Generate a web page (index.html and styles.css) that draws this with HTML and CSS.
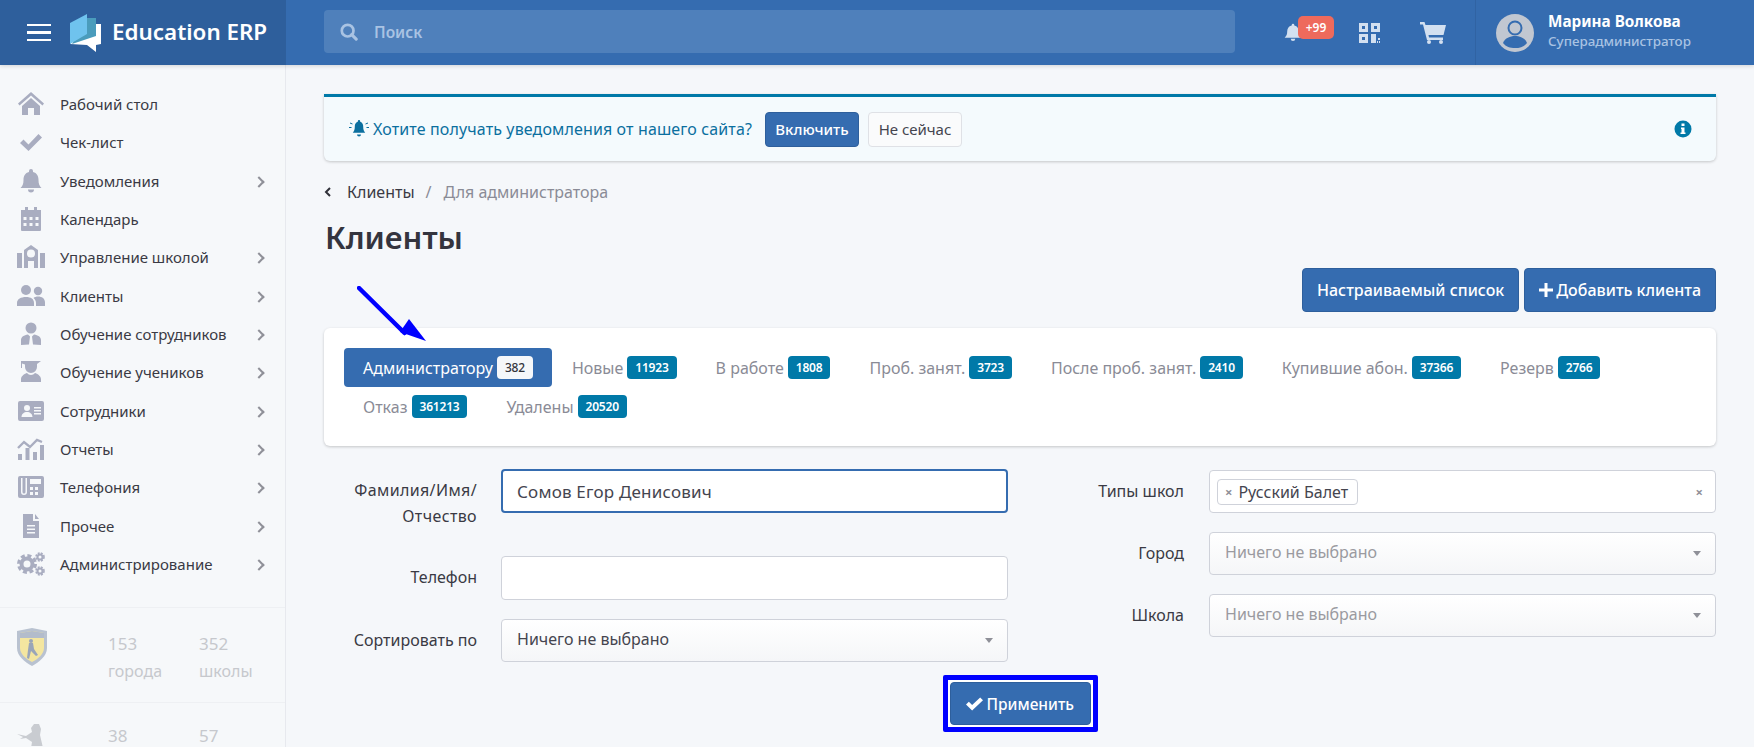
FILE: index.html
```html
<!DOCTYPE html>
<html lang="ru">
<head>
    <meta charset="UTF-8">
    <title>Education ERP</title>
    <link rel="stylesheet" href="styles.css">
</head>
<body>
    <header class="topbar">
        <div class="brand">
            <div class="burger"><span></span><span></span><span></span></div>
            <svg class="logo" viewBox="0 0 32 38">
                <path fill="#fff" d="M26 10h5v20l-5 1v7l-9-7-17-1z"/>
                <path fill="#4a9cbc" d="M17 4h9v18L2 30z"/>
                <path fill="#6fc3ee" d="M0 9l17-9v20L0 30z"/>
            </svg>
            <span class="brand-name">Education ERP</span>
        </div>
        <div class="search">
            <svg class="search-icon" viewBox="0 0 20 20"><circle cx="8.5" cy="8.5" r="6.5" fill="none" stroke="#a9c3e3" stroke-width="3"/><path d="M13 13l5 5" stroke="#a9c3e3" stroke-width="3.4" stroke-linecap="round"/></svg>
            <span>Поиск</span>
        </div>
        <div class="top-icons">
            <div class="bell-wrap">
                <svg class="top-bell" viewBox="0 0 28 28"><path fill="#d3e0f0" d="M14 1a2 2 0 0 1 2 2v1c5 1 7 5 7 9 0 5 1 7 4 10H1c3-3 4-5 4-10 0-4 2-8 7-9V3a2 2 0 0 1 2-2zM10.500 24.500h7a3.500 3.500 0 0 1-7 0z"/></svg>
                <span class="bell-badge">+99</span>
            </div>
            <svg class="top-qr" viewBox="0 0 21 20">
                <path fill="#d3e0f0" fill-rule="evenodd" d="M0 0h9v9H0zM3 3v3h3V3zM12 0h9v9h-9zM15 3v3h3V3zM0 11h9v9H0zM3 14v3h3v-3zM12 11h5v3h4v-3 0 3h-4v6h-5zM19 15h2v2h-2zM18 18h1v2h-1zM20 18h1v2h-1z"/>
            </svg>
            <svg class="top-cart" viewBox="0 0 26 22">
                <path fill="#d3e0f0" d="M0 0h4.500l1 3H26l-2.500 10H8.500l.5 2.500h14V18H7L3 2.500H0z"/>
                <circle cx="9" cy="20" r="2" fill="#d3e0f0"/><circle cx="21" cy="20" r="2" fill="#d3e0f0"/>
            </svg>
        </div>
        <div class="user">
            <svg class="avatar" viewBox="0 0 38 38">
                <circle cx="19" cy="19" r="19" fill="#c1c7d1"/>
                <circle cx="19" cy="14" r="6.500" fill="none" stroke="#356cb0" stroke-width="2"/>
                <path fill="#356cb0" d="M7 29c2-5 7-7 12-7s10 2 12 7c-3 4-7 5-12 5s-9-1-12-5z"/>
            </svg>
            <div class="user-text">
                <div class="user-name">Марина Волкова</div>
                <div class="user-role">Суперадминистратор</div>
            </div>
        </div>
    </header>

    <div class="layout">
        <aside class="sidebar">
            <nav class="side-nav">
                <a class="side-item">
                    <svg class="side-icon" viewBox="0 0 28 24"><path d="M14 0L1 11.500l1.500 2L14 3.500l11.500 10 1.500-2z"/><path d="M5 14l9-8 9 8v9h-6v-7h-6v7H5z"/></svg>
                    <span>Рабочий стол</span>
                </a>
                <a class="side-item">
                    <svg class="side-icon" viewBox="0 0 28 24"><path d="M3 13l3.500-3.500 5 5L21.500 4 25 7.500 11.500 21z"/></svg>
                    <span>Чек-лист</span>
                </a>
                <a class="side-item has-sub">
                    <svg class="side-icon" viewBox="0 0 28 24"><path d="M14 0a2 2 0 0 1 2 2v1c4 1 5.500 4 5.500 8 0 4 1 6 3 8h-21c2-2 3-4 3-8 0-4 1.500-7 5.500-8V2a2 2 0 0 1 2-2zM11 20.500h6a3 3 0 0 1-6 0z"/></svg>
                    <span>Уведомления</span>
                </a>
                <a class="side-item">
                    <svg class="side-icon" viewBox="0 0 28 24"><path fill-rule="evenodd" d="M4 3h4V0h3v3h6V0h3v3h4v20a1 1 0 0 1-1 1H5a1 1 0 0 1-1-1zM6.500 10v3h3v-3zM12.500 10v3h3v-3zM18.500 10v3h3v-3zM6.500 16v3h3v-3zM12.500 16v3h3v-3zM18.500 16v3h3v-3z"/></svg>
                    <span>Календарь</span>
                </a>
                <a class="side-item has-sub">
                    <svg class="side-icon" viewBox="0 0 28 24"><path fill-rule="evenodd" d="M14 0l7 5v18h-4v-7h-6v7H7V5zM14 4.500a4 4 0 1 0 0 8 4 4 0 0 0 0-8zM0 8h5v15H0zM23 8h5v15h-5z"/></svg>
                    <span>Управление школой</span>
                </a>
                <a class="side-item has-sub">
                    <svg class="side-icon" viewBox="0 0 28 24"><circle cx="9" cy="6" r="5"/><circle cx="21" cy="7" r="4.200"/><path d="M0 22v-3c0-4 4-6 9-6s8 2 8 6v3zM19 22v-3c0-2-1-4-2.500-5 1-1 3-1.500 4.500-1.500 4 0 7 2 7 6V22z"/></svg>
                    <span>Клиенты</span>
                </a>
                <a class="side-item has-sub">
                    <svg class="side-icon" viewBox="0 0 28 24"><circle cx="14" cy="6" r="5.500"/><path fill-rule="evenodd" d="M4 23v-5c0-3 3-5 7-5.500l2 2-1 8zM24 23v-5c0-3-3-5-7-5.500l-2 2 1 8z"/></svg>
                    <span>Обучение сотрудников</span>
                </a>
                <a class="side-item has-sub">
                    <svg class="side-icon" viewBox="0 0 28 24"><path d="M4 1h20l-4 3v3a6 6 0 0 1-12 0V4.500L5 3.500V8H4z"/><path d="M4 22v-3c0-3 4-5.500 6-6 1 1 2.500 2 4 2s3-1 4-2c2 .5 6 3 6 6v3z"/></svg>
                    <span>Обучение учеников</span>
                </a>
                <a class="side-item has-sub">
                    <svg class="side-icon" viewBox="0 0 28 24"><path fill-rule="evenodd" d="M3 2h22a2 2 0 0 1 2 2v16a2 2 0 0 1-2 2H3a2 2 0 0 1-2-2V4a2 2 0 0 1 2-2zM10 6a3 3 0 1 0 0 6 3 3 0 0 0 0-6zM4.500 18h11c0-3-2.500-5-5.500-5s-5.500 2-5.500 5zM17 8v1.500h7V8zM17 11v1.500h7V11zM17 14v1.500h7V14z"/></svg>
                    <span>Сотрудники</span>
                </a>
                <a class="side-item has-sub">
                    <svg class="side-icon" viewBox="0 0 28 24"><path d="M1 11l6-6 6 5 7-7 5 2" fill="none" stroke="#a9adc0" stroke-width="2.400"/><path d="M1 17h4v6H1zM8.500 11h4v12h-4zM16 15h4v8h-4zM23 8h4v15h-4z"/></svg>
                    <span>Отчеты</span>
                </a>
                <a class="side-item has-sub">
                    <svg class="side-icon" viewBox="0 0 28 24"><path fill-rule="evenodd" d="M3 1h22a2 2 0 0 1 2 2v18a2 2 0 0 1-2 2H3a2 2 0 0 1-2-2V3a2 2 0 0 1 2-2zM4 3v14a3 3 0 0 0 6 0V3h-1.500v14a1.500 1.500 0 0 1-3 0V3zM13 4v5h11V4zM13 12v3h3v-3zM18 12v3h3v-3zM13 17v3h3v-3zM18 17v3h3v-3z"/></svg>
                    <span>Телефония</span>
                </a>
                <a class="side-item has-sub">
                    <svg class="side-icon" viewBox="0 0 28 24"><path fill-rule="evenodd" d="M6 0h10v7h6v17H6zM18 0l4 5h-4zM10 11v1.500h8V11zM10 14.500V16h8v-1.500zM10 18v1.500h8V18z"/></svg>
                    <span>Прочее</span>
                </a>
                <a class="side-item has-sub">
                    <svg class="side-icon" viewBox="0 0 28 24">
                        <circle cx="10" cy="12" r="5.500" fill="none" stroke="#a9adc0" stroke-width="4"/>
                        <circle cx="10" cy="12" r="8.500" fill="none" stroke="#a9adc0" stroke-width="3" stroke-dasharray="4 2.700"/>
                        <circle cx="23" cy="5" r="2.500" fill="none" stroke="#a9adc0" stroke-width="2"/>
                        <circle cx="23" cy="5" r="4" fill="none" stroke="#a9adc0" stroke-width="1.600" stroke-dasharray="2 1.200"/>
                        <circle cx="23" cy="19" r="2.500" fill="none" stroke="#a9adc0" stroke-width="2"/>
                        <circle cx="23" cy="19" r="4" fill="none" stroke="#a9adc0" stroke-width="1.600" stroke-dasharray="2 1.200"/>
                    </svg>
                    <span>Администрирование</span>
                </a>
            </nav>
            <div class="side-stat">
                <svg class="stat-logo" viewBox="0 0 30 38">
                    <path fill="#b9c2d0" d="M0 3l15-3 15 3v17c0 8-8 14-15 18C8 34 0 28 0 20z"/>
                    <path fill="#f4e6a0" d="M3 5l12-2 12 2v15c0 6-6 11-12 14C9 31 3 26 3 20z"/>
                    <path fill="#b3bccb" d="M3 5l12-2 12 2v5H3z"/>
                    <circle cx="14" cy="13" r="2" fill="#9aa5b8"/>
                    <path fill="#9aa5b8" d="M12 15h4l1 6 4 6-2 1-5-5-2 8-2-1 1-8z"/>
                </svg>
                <div class="stat"><div class="stat-num">153</div><div class="stat-label">города</div></div>
                <div class="stat"><div class="stat-num">352</div><div class="stat-label">школы</div></div>
            </div>
            <div class="side-stat side-stat-cut">
                <svg class="stat-logo" viewBox="0 0 30 38">
                    <path fill="#c9ccd1" d="M0 11l9 2 6-4-1-4 3-4h5l2 5-1 6 3 13H14l1-6-6-4-6 1 3-2z"/>
                </svg>
                <div class="stat"><div class="stat-num">38</div></div>
                <div class="stat"><div class="stat-num">57</div></div>
            </div>
        </aside>

        <main class="content">
            <div class="alert">
                <svg class="alert-bell" viewBox="0 0 20 18">
                    <path fill="#0b6f9f" d="M10 0a1.200 1.200 0 0 1 1.200 1.200v.6c2.300.7 3 2.700 3 5 0 3 .7 4.400 2 6H3.800c1.300-1.600 2-3 2-6 0-2.300.7-4.300 3-5v-.6A1.200 1.200 0 0 1 10 0zM8 14.500h4a2 2 0 0 1-4 0z"/>
                    <path stroke="#0b6f9f" stroke-width="1" d="M1 3l2.500 1M19 3l-2.500 1M0 7.500h2.500M20 7.500h-2.500"/>
                </svg>
                <span class="alert-text">Хотите получать уведомления от нашего сайта?</span>
                <button class="btn btn-small">Включить</button>
                <button class="btn-light">Не сейчас</button>
                <svg class="alert-info" viewBox="0 0 18 18"><circle cx="9" cy="9" r="8.500" fill="#0079a8"/><path fill="#fff" d="M7.500 3.500h3v2.500h-3zM7 7.500h3.500v5h1V14H6.500v-1.500h1V9H7z"/></svg>
            </div>

            <div class="crumbs">
                <svg class="crumb-back" viewBox="0 0 8 10"><path d="M6 1L2 5l4 4" fill="none" stroke="#2f3038" stroke-width="2"/></svg>
                <a class="crumb-link">Клиенты</a>
                <span class="crumb-sep">/</span>
                <span class="crumb-now">Для администратора</span>
            </div>
            <h1 class="page-title">Клиенты</h1>

            <div class="toolbar">
                <button class="btn btn-big">Настраиваемый список</button>
                <button class="btn btn-big"><svg class="plus" viewBox="0 0 14 14"><path fill="#fff" d="M5.500 0h3v5.500H14v3H8.500V14h-3V8.500H0v-3h5.500z"/></svg>Добавить клиента</button>
            </div>

            <div class="card tabs">
                <a class="tab tab-active">Администратору <span class="badge badge-light">382</span></a>
                <a class="tab">Новые <span class="badge">11923</span></a>
                <a class="tab">В работе <span class="badge">1808</span></a>
                <a class="tab">Проб. занят. <span class="badge">3723</span></a>
                <a class="tab">После проб. занят. <span class="badge">2410</span></a>
                <a class="tab">Купившие абон. <span class="badge">37366</span></a>
                <a class="tab">Резерв <span class="badge">2766</span></a>
                <a class="tab">Отказ <span class="badge">361213</span></a>
                <a class="tab">Удалены <span class="badge">20520</span></a>
            </div>

            <form class="filters">
                <div class="filter-col">
                    <div class="filter-row">
                        <label class="filter-label label-wide">Фамилия/Имя/<br>Отчество</label>
                        <input class="field field-focus" type="text" value="Сомов Егор Денисович">
                    </div>
                    <div class="filter-row">
                        <label class="filter-label">Телефон</label>
                        <input class="field" type="text">
                    </div>
                    <div class="filter-row">
                        <label class="filter-label">Сортировать по</label>
                        <div class="field select"><span>Ничего не выбрано</span><i class="caret"></i></div>
                    </div>
                </div>
                <div class="filter-col filter-col-right">
                    <div class="filter-row">
                        <label class="filter-label">Типы школ</label>
                        <div class="field multi">
                            <span class="chip"><b class="chip-x">×</b> Русский Балет</span>
                            <b class="multi-x">×</b>
                        </div>
                    </div>
                    <div class="filter-row">
                        <label class="filter-label">Город</label>
                        <div class="field select is-empty"><span>Ничего не выбрано</span><i class="caret"></i></div>
                    </div>
                    <div class="filter-row">
                        <label class="filter-label">Школа</label>
                        <div class="field select is-empty"><span>Ничего не выбрано</span><i class="caret"></i></div>
                    </div>
                </div>
                <div class="apply-row">
                    <div class="apply-mark">
                        <button class="btn btn-apply" type="button">
                            <svg class="apply-check" viewBox="0 0 18 14"><path fill="#fff" d="M0 7.500l3-3 3.500 3.500L15 0l3 3L6.500 14z"/></svg>Применить
                        </button>
                    </div>
                </div>
            </form>

            <!-- стрелка-пометка поверх вкладок -->
            <svg class="mark-arrow" viewBox="0 0 72 58">
                <path d="M2 2l50 40" stroke="#0000ff" stroke-width="4.500" stroke-linecap="round" transform="rotate(6 2 2)"/>
                <path fill="#0000ff" d="M69 55L43 46l9-13z"/>
            </svg>
        </main>
    </div>
</body>
</html>
```

FILE: styles.css
```css
* {
    box-sizing: border-box;
}
html, body {
    height: 747px;
    overflow: hidden;
}
body {
    margin: 0;
    background-color: #f5f7fa;
    color: #3a3a44;
    font-family: "Noto Sans", "Open Sans", sans-serif;
    font-size: 16px;
}
button {
    font-family: inherit;
}

/* верхняя панель */
.topbar {
    display: flex;
    align-items: center;
    height: 65px;
    background-color: #356cb0;
    box-shadow: 0 1px 4px rgba(0, 0, 0, 0.15);
    position: relative;
    z-index: 2;
}
.brand {
    display: flex;
    align-items: center;
    width: 286px;
    height: 100%;
    padding-left: 27px;
    background-color: #2e5f9c;
}
.burger {
    display: flex;
    flex-direction: column;
    gap: 5px;
    width: 24px;
    margin-right: 19px;
}
.burger span {
    height: 2.500px;
    background-color: #fff;
}
.logo {
    width: 32px;
    height: 38px;
    margin-right: 10px;
}
.brand-name {
    margin-bottom: 3px;
    color: #fff;
    font-size: 22.400px;
    font-weight: 600;
    white-space: nowrap;
}
.search {
    display: flex;
    align-items: center;
    width: 911px;
    height: 43px;
    margin-left: 38px;
    margin-bottom: 2px;
    padding-left: 16px;
    border-radius: 4px;
    background-color: #4f80bb;
    color: #a9c3e3;
    font-size: 15.500px;
    font-weight: 600;
}
.search-icon {
    width: 18px;
    height: 18px;
    margin-right: 16px;
}
.top-icons {
    display: flex;
    align-items: center;
    height: 100%;
    margin-left: 49px;
}
.bell-wrap {
    width: 50px;
    height: 40px;
    position: relative;
}
.top-bell {
    display: block;
    width: 18px;
    height: 18px;
    margin-top: 10px;
}
.bell-badge {
    position: absolute;
    left: 14px;
    top: 3px;
    width: 36px;
    height: 23px;
    border-radius: 5px;
    background-color: #ee6a5c;
    color: #fff;
    font-size: 12px;
    font-weight: 600;
    line-height: 23px;
    text-align: center;
}
.top-qr {
    width: 21px;
    height: 20px;
    margin-left: 25px;
}
.top-cart {
    width: 26px;
    height: 22px;
    margin-left: 40px;
}
.user {
    display: flex;
    align-items: center;
    height: 100%;
    margin-left: 29px;
    padding-left: 20px;
    border-left: 1px solid #3063a3;
}
.avatar {
    width: 38px;
    height: 38px;
    margin-right: 14px;
}
.user-text {
    padding-bottom: 2px;
}
.user-name {
    margin-bottom: 1px;
    color: #fff;
    font-size: 15.300px;
    font-weight: 700;
    line-height: 19px;
}
.user-role {
    color: #a9c3e3;
    font-size: 13.400px;
    font-weight: 500;
    line-height: 19px;
}

/* основная сетка */
.layout {
    display: flex;
    height: 682px;
    overflow: hidden;
}
.sidebar {
    flex: none;
    width: 286px;
    background-color: #f6f8fa;
    border-right: 1px solid #e7e9ee;
}
.side-nav {
    padding: 20px 0 24px;
}
.side-item {
    display: flex;
    align-items: center;
    height: 38.330px;
    padding-left: 17px;
    font-size: 15px;
    position: relative;
}
.side-icon {
    flex: none;
    width: 28px;
    height: 24px;
    margin-right: 15px;
    fill: #a9adc0;
}
.has-sub::after {
    content: "";
    position: absolute;
    left: 255px;
    top: 16px;
    width: 6px;
    height: 6px;
    border-top: 2px solid #8f9098;
    border-right: 2px solid #8f9098;
    transform: rotate(45deg);
}
.side-stat {
    display: flex;
    height: 95px;
    padding: 20px 0 0 17px;
    border-top: 1px solid #eef0f3;
    color: #c6c8cd;
    overflow: hidden;
}
.side-stat-cut {
    height: 44px;
    padding-top: 24px;
}
.side-stat-cut .stat-num {
    line-height: 18px;
}
.side-stat-cut .stat-logo {
    margin-top: -4px;
}
.stat-logo {
    flex: none;
    width: 30px;
    height: 38px;
    margin-right: 61px;
    filter: blur(0.4px);
}
.stat {
    flex: none;
    width: 91px;
}
.stat-num {
    font-size: 17px;
    line-height: 32px;
}
.stat-label {
    margin-top: -2px;
    font-size: 16px;
    line-height: 26px;
}

/* контент */
.content {
    flex: 1;
    padding: 29px 38px 0;
    position: relative;
}
.alert {
    display: flex;
    align-items: center;
    height: 67px;
    padding: 0 24px 0 25px;
    border-top: 3px solid #0079a8;
    border-radius: 0 0 6px 6px;
    background-color: #f4fafd;
    box-shadow: 0 1px 3px rgba(0, 0, 0, 0.2);
}
.alert-bell {
    width: 20px;
    height: 18px;
    margin-right: 4px;
}
.alert-text {
    margin-right: 13px;
    color: #0b6f9f;
    font-size: 16px;
    letter-spacing: 0.130px;
    white-space: nowrap;
}
.btn {
    border: 1px solid #2e5f9c;
    border-radius: 4px;
    background-color: #356cb0;
    color: #fff;
    font-size: 16px;
    font-weight: 500;
}
.btn-small {
    width: 94px;
    height: 35px;
    padding: 0;
    font-size: 15px;
}
.btn-light {
    width: 94px;
    height: 35px;
    margin-left: 9px;
    padding: 0;
    border: 1px solid #dfe1e6;
    border-radius: 4px;
    background-color: #fafbfc;
    color: #45454f;
    font-size: 15px;
}
.alert-info {
    width: 18px;
    height: 18px;
    margin-left: auto;
}
.crumbs {
    display: flex;
    align-items: center;
    height: 24px;
    margin-top: 19px;
}
.crumb-back {
    width: 8px;
    height: 10px;
    margin-right: 15px;
}
.crumb-sep {
    margin: 0 12px 0 11px;
    color: #8a8b96;
}
.crumb-now {
    color: #8a8b96;
}
.page-title {
    margin: 13px 0 0 1px;
    color: #34343e;
    font-size: 31px;
    font-weight: 600;
    line-height: 40px;
}
.toolbar {
    display: flex;
    justify-content: flex-end;
    gap: 5px;
    margin-top: 11px;
}
.btn-big {
    display: flex;
    align-items: center;
    height: 44px;
    padding: 0 14px;
}
.plus {
    width: 14px;
    height: 14px;
    margin-right: 3px;
}
.card {
    background-color: #fff;
    border-radius: 6px;
    box-shadow: 0 1px 3px rgba(0, 0, 0, 0.2);
}
.tabs {
    display: flex;
    flex-wrap: wrap;
    align-content: flex-start;
    gap: 0 1px;
    height: 118px;
    margin-top: 16px;
    padding: 20px 20px;
}
.tab {
    display: flex;
    align-items: center;
    height: 39px;
    padding: 0 19px;
    border-radius: 4px;
    color: #8a8b96;
    font-size: 16px;
    gap: 4px;
}
.tab-active {
    background-color: #356cb0;
    color: #fff;
}
.badge {
    height: 23px;
    padding: 0 8px;
    border-radius: 4px;
    background-color: #0079a8;
    color: #fff;
    font-size: 12px;
    font-weight: 600;
    letter-spacing: -0.200px;
    line-height: 23px;
}
.badge-light {
    background-color: #f5f7fa;
    color: #33343c;
    font-weight: 500;
}

/* форма фильтров */
.filters {
    display: grid;
    grid-template-columns: 684px 1fr;
    column-gap: 32px;
    margin-top: 23px;
}
.filter-col {
    display: flex;
    flex-direction: column;
    gap: 19px;
}
.filter-col-right {
    padding-top: 1px;
}
.filter-row {
    display: grid;
    grid-template-columns: 153px 507px;
    column-gap: 24px;
    align-items: start;
}
.filter-col-right .filter-row {
    grid-template-columns: 144px 507px;
    column-gap: 25px;
}
.filter-label {
    padding-top: 8px;
    font-size: 16px;
    line-height: 26px;
    text-align: right;
    color: #3a3a44;
}
.label-wide {
    letter-spacing: 0.370px;
}
.filter-row:first-child .filter-label {
    min-height: 68px;
}
.filter-col-right .filter-row .filter-label {
    min-height: 0;
}
.field {
    display: block;
    width: 100%;
    height: 44px;
    padding: 0 15px;
    border: 1px solid #cfd2da;
    border-radius: 4px;
    background-color: #fff;
    color: #45454f;
    font-family: inherit;
    font-size: 16px;
    outline: none;
}
.field-focus {
    border: 2px solid #356cb0;
    padding: 0 14px;
    font-size: 17px;
    letter-spacing: 0.200px;
}
.select {
    display: flex;
    align-items: center;
    justify-content: space-between;
    height: 43px;
    padding-bottom: 4px;
    background-image: linear-gradient(#ffffff, #f5f6f8);
}
.is-empty {
    color: #9a9aa0;
}
.caret {
    width: 0;
    height: 0;
    margin-right: -1px;
    margin-top: 4px;
    border-top: 5px solid #8f9098;
    border-left: 4px solid transparent;
    border-right: 4px solid transparent;
}
.multi {
    display: flex;
    align-items: center;
    justify-content: space-between;
    height: 43px;
    padding: 0 12px 0 7px;
}
.chip {
    display: flex;
    align-items: center;
    gap: 6px;
    width: 141px;
    height: 26px;
    padding-left: 7px;
    border: 1px solid #cfd2da;
    border-radius: 4px;
    white-space: nowrap;
}
.chip-x, .multi-x {
    color: #8f9098;
    font-size: 13px;
}
.apply-row {
    grid-column: 1 / 3;
    display: flex;
    justify-content: center;
    margin-top: 13px;
}
.apply-mark {
    padding: 2px;
    border: 5px solid #0000ff;
    border-radius: 2px;
    background-color: #fff;
}
.btn-apply {
    display: flex;
    align-items: center;
    width: 141px;
    height: 43px;
    padding: 0 0 0 15px;
    font-size: 15.500px;
}
.apply-check {
    width: 17px;
    height: 14px;
    margin-right: 4px;
}
.mark-arrow {
    position: absolute;
    left: 71px;
    top: 221px;
    width: 72px;
    height: 58px;
}
```
